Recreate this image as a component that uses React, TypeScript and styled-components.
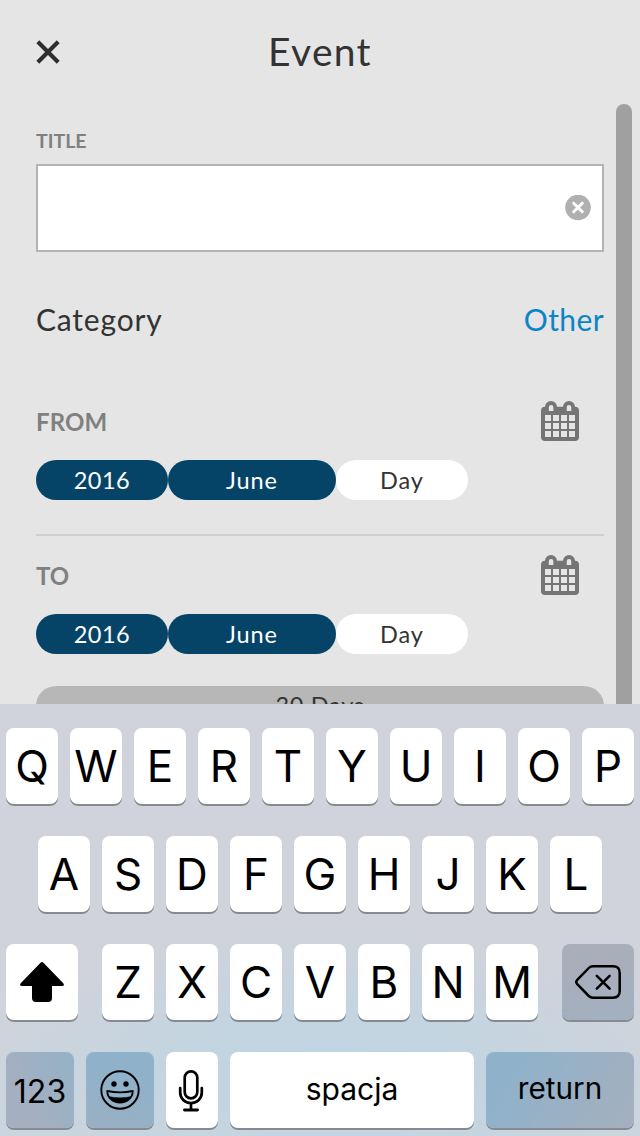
import React from 'react';
import styled, { createGlobalStyle } from 'styled-components';

const Global = createGlobalStyle`
  * { box-sizing: border-box; }
  body { margin: 0; background: #e5e5e5; }
`;

const Screen = styled.div`
  width: 640px;
  height: 1136px;
  overflow: hidden;
  display: flex;
  flex-direction: column;
  background: #e5e5e5;
  color: #333;
  font-family: Lato, 'Liberation Sans', sans-serif;
`;

const Header = styled.header`
  height: 104px;
  flex: none;
  display: grid;
  grid-template-columns: 60px 1fr 60px;
  align-items: center;
  padding: 0 36px;
`;

const Title = styled.h1`
  margin: 0;
  padding-bottom: 3px;
  text-align: center;
  font-size: 39px;
  font-weight: 400;
  line-height: 48px;
  letter-spacing: 1.3px;
`;

const Body = styled.main`
  height: 600px;
  flex: none;
  display: flex;
  overflow: hidden;
`;

const Form = styled.div`
  width: 616px;
  padding: 0 12px 0 36px;
`;

const ScrollThumb = styled.div`
  width: 16px;
  height: 640px;
  border-radius: 8px;
  background: #a0a0a0;
`;

const FieldLabel = styled.div`
  padding-top: 25px;
  height: 60px;
  font-size: 19.5px;
  font-weight: 700;
  line-height: 24px;
  color: #808080;
`;

const Input = styled.div`
  height: 88px;
  border: 2px solid #b4b4b4;
  background: #fff;
  display: flex;
  justify-content: flex-end;
  align-items: center;
  padding-right: 11px;
`;

const CategoryRow = styled.div`
  height: 136px;
  display: flex;
  justify-content: space-between;
  align-items: center;
  padding-bottom: 2px;
  font-size: 30px;
  line-height: 36px;
  letter-spacing: 0.8px;
`;

const Link = styled.span`
  color: #0c84c6;
  letter-spacing: 0.4px;
`;

const DateSection = styled.section<{ $divided?: boolean }>`
  height: ${p => (p.$divided ? 148 : 150)}px;
  border-bottom: ${p => (p.$divided ? '2px solid #cfcfcf' : '0')};
`;

const DateHead = styled.div<{ $top: number }>`
  display: flex;
  justify-content: space-between;
  align-items: center;
  height: ${p => p.$top + 59}px;
  padding: ${p => p.$top}px 25px 0 0;
`;

const DateLabel = styled.span<{ $track: number }>`
  font-size: 24px;
  font-weight: 700;
  line-height: 30px;
  color: #808080;
  letter-spacing: ${p => p.$track}px;
  margin-top: -17px;
`;

const CalendarBox = styled.span`
  height: 40px;
  display: flex;
  margin-top: -19px;
`;

const Pills = styled.div`
  display: flex;
`;

const Pill = styled.span<{ $w: number; $on?: boolean; $track: number }>`
  width: ${p => p.$w}px;
  height: 40px;
  border-radius: 20px;
  background: ${p => (p.$on ? '#054467' : '#fff')};
  color: ${p => (p.$on ? '#fff' : '#333')};
  display: flex;
  align-items: center;
  justify-content: center;
  font-size: 23.5px;
  letter-spacing: ${p => p.$track}px;
  padding-bottom: 1px;
`;

const DaysBar = styled.div`
  height: 40px;
  border-radius: 20px;
  background: #b7b7b7;
  text-align: center;
  font-size: 23.5px;
  line-height: 38px;
  letter-spacing: 0.7px;
`;

const Keyboard = styled.div`
  height: 432px;
  flex: none;
  padding: 24px 6px 0;
  display: flex;
  flex-direction: column;
  gap: 32px;
  color: #000;
  font-family: Inter, 'Liberation Sans', sans-serif;
  font-weight: 370;
  background:
    radial-gradient(ellipse 340px 125px at 330px 355px, rgba(188, 213, 227, 0.85), rgba(188, 213, 227, 0.6) 40%, rgba(188, 213, 227, 0) 100%),
    linear-gradient(#d0d3db 0%, #d0d3db 65%, #ced4dc 80%, #c9d5df 100%);
`;

const KeyRow = styled.div<{ $between?: boolean }>`
  display: flex;
  justify-content: ${p => (p.$between ? 'space-between' : 'center')};
  gap: 12px;
`;

const Letters = styled.div`
  display: flex;
  gap: 12px;
`;

const Key = styled.div<{ $w?: number; $bg?: string; $size?: number; $drop?: number; $lift?: number; $nudge?: number }>`
  width: ${p => p.$w ?? 52}px;
  height: 76px;
  border-radius: 8px;
  background: ${p => p.$bg ?? '#fff'};
  box-shadow: 0 2px 0 #868a91;
  display: flex;
  align-items: center;
  justify-content: center;
  font-size: ${p => p.$size ?? 44}px;
  line-height: 1;
  padding: ${p => p.$drop ?? 0}px ${p => p.$nudge ?? 0}px ${p => p.$lift ?? 0}px 0;
`;

const CloseIcon = () => (
  <svg width="24" height="24" viewBox="0 0 24 24" stroke="#2e2e2e" strokeWidth="4.1">
    <path d="M1.8 1.8 22.2 22.2M22.2 1.8 1.8 22.2" />
  </svg>
);

const ClearIcon = () => (
  <svg width="26" height="26" viewBox="0 0 26 26">
    <circle cx="13" cy="12.5" r="12.8" fill="#b0b0b0" />
    <path d="m8.7 8.2 8.6 8.6m0-8.6-8.6 8.6" stroke="#fff" strokeWidth="3" strokeLinecap="round" />
  </svg>
);

const columns = [4, 12, 20, 28];
const lines = [14, 22, 30];

const CalendarIcon = () => (
  <svg width="38" height="40" viewBox="0 0 38 40">
    <rect y="5.7" width="38" height="34.3" rx="4" fill="#757575" />
    <path d="M4 8V6a6 6 0 0 1 12 0v2zM22 8V6a6 6 0 0 1 12 0v2z" fill="#757575" />
    <path d="M7.8 10V6.2a2.3 2.3 0 0 1 4.6 0V10zM25.7 10V6.2a2.3 2.3 0 0 1 4.6 0V10z" fill="#e5e5e5" />
    {lines.map(y => columns.map(x => <rect key={`${x}-${y}`} x={x} y={y} width="6" height="6" fill="#e5e5e5" />))}
  </svg>
);

const ShiftIcon = () => (
  <svg width="44" height="40" viewBox="0 0 44 40">
    <path d="M20.8.6Q22-.5 23.2.6L43.3 21.3Q45 24 42 24H32V36Q32 40 28 40H16Q12 40 12 36V24H2Q-1 24 .7 21.3Z" />
  </svg>
);

const DeleteIcon = () => (
  <svg width="46" height="34" viewBox="0 0 46 34" fill="none" stroke="#000" strokeWidth="2.5" strokeLinecap="round" strokeLinejoin="round">
    <path d="M18 1.3H38Q44.7 1.3 44.7 8V26Q44.7 32.7 38 32.7H18Q15.5 32.7 13.8 31L2 18.8Q.5 17 2 15.2L13.8 3Q15.5 1.3 18 1.3Z" />
    <path d="m21.8 10.8 12.8 12.8m0-12.8L21.8 23.6" />
  </svg>
);

const SmileIcon = () => (
  <svg width="40" height="40" viewBox="0 0 40 40">
    <circle cx="20" cy="20" r="18.7" fill="none" stroke="#000" strokeWidth="1.9" />
    <circle cx="14" cy="14" r="2.7" />
    <circle cx="26" cy="14" r="2.7" />
    <path d="M7.2 21Q20 23.8 32.8 21C32.6 28 27 32.5 20 32.5S7.4 28 7.2 21Z" fill="none" stroke="#000" strokeWidth="1.8" strokeLinejoin="round" />
    <path d="M8.8 26.2Q20 29 31.2 26.2C29 31 25 33 20 33S11 31 8.8 26.2Z" />
  </svg>
);

const MicIcon = () => (
  <svg width="26" height="42" viewBox="0 0 26 42" fill="none" stroke="#000" strokeWidth="2.7" strokeLinecap="round">
    <rect x="6.7" y="1.4" width="12.6" height="27" rx="6.3" />
    <path d="M2.2 18v4.5c0 6 4.5 10.500 10.800 10.500s10.800-4.500 10.800-10.500V18M13 33v6.500" />
    <path d="M6.500 40h13" strokeWidth="2.900" />
  </svg>
);

const DatePicker = ({ label, track, top, divided }: { label: string; track: number; top: number; divided?: boolean }) => (
  <DateSection $divided={divided}>
    <DateHead $top={top}>
      <DateLabel $track={track}>{label}</DateLabel>
      <CalendarBox><CalendarIcon /></CalendarBox>
    </DateHead>
    <Pills>
      <Pill $w={132} $on $track={0.5}>2016</Pill>
      <Pill $w={168} $on $track={0.9}>June</Pill>
      <Pill $w={132} $track={0.9}>Day</Pill>
    </Pills>
  </DateSection>
);

const letterKeys = (s: string) => s.split('').map(c => <Key key={c}>{c}</Key>);

export default function App() {
  return (
    <Screen>
      <Global />
      <Header>
        <CloseIcon />
        <Title>Event</Title>
      </Header>
      <Body>
        <Form>
          <FieldLabel>TITLE</FieldLabel>
          <Input><ClearIcon /></Input>
          <CategoryRow>
            <span>Category</span>
            <Link>Other</Link>
          </CategoryRow>
          <DatePicker label="FROM" track={0.1} top={13} divided />
          <DatePicker label="TO" track={0} top={19} />
          <DaysBar>30 Days</DaysBar>
        </Form>
        <ScrollThumb />
      </Body>
      <Keyboard>
        <KeyRow>{letterKeys('QWERTYUIOP')}</KeyRow>
        <KeyRow>{letterKeys('ASDFGHJKL')}</KeyRow>
        <KeyRow $between>
          <Key $w={72}><ShiftIcon /></Key>
          <Letters>{letterKeys('ZXCVBNM')}</Letters>
          <Key $w={72} $bg="linear-gradient(165deg, #a9aebb 25%, #a1b0c0)"><DeleteIcon /></Key>
        </KeyRow>
        <KeyRow>
          <Key $w={68} $bg="linear-gradient(60deg, #a4afc0 30%, #93b2c7)" $size={32} $drop={4}>123</Key>
          <Key $w={68} $bg="linear-gradient(25deg, #9aafc2, #8fb2ca 65%)" $nudge={1} $lift={1}><SmileIcon /></Key>
          <Key $nudge={2} $drop={1}><MicIcon /></Key>
          <Key $w={244} $size={30} $lift={2}>spacja</Key>
          <Key $w={148} $bg="linear-gradient(120deg, #8fb2ca 20%, #9cb0c3 65%, #a4afbe)" $size={29.7} $lift={2}>return</Key>
        </KeyRow>
      </Keyboard>
    </Screen>
  );
}
